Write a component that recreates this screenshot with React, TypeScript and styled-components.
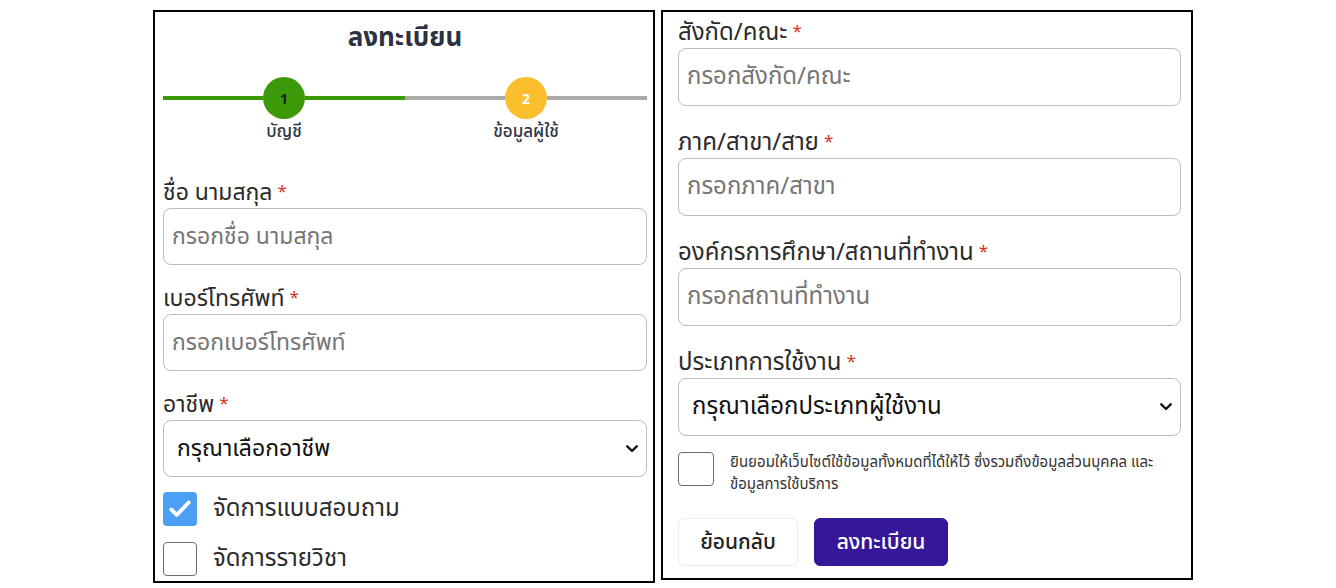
import React from "react";
import styled, { createGlobalStyle } from "styled-components";

const GlobalStyle = createGlobalStyle`
  * { box-sizing: border-box; }
  html, body { margin: 0; padding: 0; background: #ffffff; }
  body {
    font-family: "Noto Sans Thai", "Noto Sans Thai UI", "Noto Sans", sans-serif;
    color: #2b2b2b;
  }
`;

const Page = styled.div`
  display: flex;
  align-items: flex-start;
  gap: 6px;
  padding: 10px 0 0 153px;
`;

const Panel = styled.section<{ $w: number; $h: number; $pad: string; $fs: number }>`
  width: ${(p) => p.$w}px;
  height: ${(p) => p.$h}px;
  border: 2px solid #000;
  padding: ${(p) => p.$pad};
  display: flex;
  flex-direction: column;
  overflow: hidden;
  font-size: ${(p) => p.$fs}px;
`;

const Title = styled.h1`
  margin: 8px 0 0;
  text-align: center;
  font-size: 26px;
  line-height: 36px;
  font-weight: 700;
  color: #2d3142;
`;

const Stepper = styled.div`
  display: grid;
  grid-template-columns: 1fr 1fr;
  margin: 21px 0 35px;
`;

const Step = styled.div`
  display: flex;
  flex-direction: column;
  align-items: stretch;
`;

const Track = styled.div`
  display: flex;
  align-items: center;
`;

const Segment = styled.div<{ $color: string }>`
  flex: 1;
  height: 4px;
  background: ${(p) => p.$color};
`;

const Circle = styled.div<{ $bg: string; $fg: string }>`
  width: 42px;
  height: 42px;
  border-radius: 50%;
  background: ${(p) => p.$bg};
  color: ${(p) => p.$fg};
  display: flex;
  align-items: center;
  justify-content: center;
  font-size: 14px;
  font-weight: 700;
  font-family: "Open Sans", "Noto Sans", sans-serif;
`;

const StepLabel = styled.div`
  margin-top: 2px;
  height: 22px;
  text-align: center;
  font-size: 17px;
  line-height: 22px;
  font-weight: 500;
  color: #2e3547;
`;

const Field = styled.div<{ $gap: number }>`
  display: flex;
  flex-direction: column;
  margin-bottom: ${(p) => p.$gap}px;
`;

const Label = styled.label`
  display: block;
  height: 30px;
  font-size: 1em;
  line-height: 30px;
  color: #2b2b2b;
  white-space: nowrap;
`;

const Star = styled.span`
  color: #d93025;
  font-size: 17px;
  line-height: 1;
  margin-left: 5px;
  vertical-align: 3px;
`;

const TextInput = styled.input<{ $h: number }>`
  height: ${(p) => p.$h}px;
  width: 100%;
  border: 1px solid #bdbdbd;
  border-radius: 8px;
  padding: 0 8px;
  font-family: inherit;
  font-size: 1em;
  color: #222;
  background: #fff;
  outline: none;
  &::placeholder { color: #767676; }
`;

const SelectWrap = styled.div`
  position: relative;
  display: flex;
`;

const Select = styled.select<{ $h: number }>`
  appearance: none;
  -webkit-appearance: none;
  height: ${(p) => p.$h}px;
  width: 100%;
  border: 1px solid #bdbdbd;
  border-radius: 8px;
  padding: 0 32px 0 13px;
  font-family: inherit;
  font-size: 1em;
  font-weight: 400;
  color: #111;
  background: #fff;
  outline: none;
`;

const Chevron = styled.svg`
  position: absolute;
  right: 9px;
  top: 50%;
  margin-top: -4px;
  pointer-events: none;
`;

const CheckRow = styled.div<{ $mb: number }>`
  display: flex;
  align-items: center;
  gap: 16px;
  margin-bottom: ${(p) => p.$mb}px;
`;

const Box = styled.span<{ $checked?: boolean; $w?: number }>`
  flex: none;
  width: ${(p) => p.$w ?? 34}px;
  height: 34px;
  border-radius: 4px;
  border: ${(p) => (p.$checked ? "none" : "1.5px solid #6b6b6b")};
  background: ${(p) => (p.$checked ? "#4b9ff5" : "#fff")};
  display: flex;
  align-items: center;
  justify-content: center;
`;

const CheckText = styled.span`
  font-size: 24px;
  line-height: 30px;
  color: #2b2b2b;
`;

const ConsentRow = styled.div`
  display: flex;
  align-items: flex-start;
  gap: 16px;
  margin-bottom: 22px;
`;

const ConsentText = styled.p`
  margin: 0;
  font-size: 15px;
  line-height: 22px;
  color: #333;
  white-space: nowrap;
`;

const Buttons = styled.div`
  display: flex;
  gap: 16px;
`;

const Button = styled.button<{ $primary?: boolean; $w: number }>`
  width: ${(p) => p.$w}px;
  height: 48px;
  border-radius: 6px;
  border: 1px solid ${(p) => (p.$primary ? "#35179a" : "#ececec")};
  background: ${(p) => (p.$primary ? "#35179a" : "#fff")};
  color: ${(p) => (p.$primary ? "#fff" : "#222")};
  font-family: inherit;
  font-size: 21px;
  font-weight: 500;
  cursor: pointer;
`;

const Check = () => (
  <svg width="26" height="26" viewBox="0 0 24 24" fill="none">
    <path d="M4 12.5l5 5L20 6" stroke="#fff" strokeWidth="3.6" strokeLinecap="round" strokeLinejoin="round" />
  </svg>
);

const Req = ({ children }: { children: React.ReactNode }) => (
  <Label>
    {children}
    <Star>*</Star>
  </Label>
);

const Dropdown = ({ h, text }: { h: number; text: string }) => (
  <SelectWrap>
    <Select $h={h} defaultValue="">
      <option value="">{text}</option>
    </Select>
    <Chevron width="12" height="8" viewBox="0 0 12 8" fill="none">
      <path d="M1.3 1.3L6 6L10.7 1.3" stroke="#111" strokeWidth="2.4" strokeLinecap="round" strokeLinejoin="round" />
    </Chevron>
  </SelectWrap>
);

export default function App() {
  return (
    <>
      <GlobalStyle />
      <Page>
        <Panel $w={502} $h={573} $pad="0 6px 0 8px" $fs={23}>
          <Title>ลงทะเบียน</Title>
          <Stepper>
            <Step>
              <Track>
                <Segment $color="#3c9a08" />
                <Circle $bg="#3c9a08" $fg="#1a1a1a">1</Circle>
                <Segment $color="#3c9a08" />
              </Track>
              <StepLabel>บัญชี</StepLabel>
            </Step>
            <Step>
              <Track>
                <Segment $color="#aaaaaa" />
                <Circle $bg="#fbbf2e" $fg="#ffffff">2</Circle>
                <Segment $color="#aaaaaa" />
              </Track>
              <StepLabel>ข้อมูลผู้ใช้</StepLabel>
            </Step>
          </Stepper>
          <Field $gap={19}>
            <Req>ชื่อ นามสกุล</Req>
            <TextInput $h={57} placeholder="กรอกชื่อ นามสกุล" />
          </Field>
          <Field $gap={19}>
            <Req>เบอร์โทรศัพท์</Req>
            <TextInput $h={57} placeholder="กรอกเบอร์โทรศัพท์" />
          </Field>
          <Field $gap={15}>
            <Req>อาชีพ</Req>
            <Dropdown h={57} text="กรุณาเลือกอาชีพ" />
          </Field>
          <CheckRow $mb={16}>
            <Box $checked>
              <Check />
            </Box>
            <CheckText>จัดการแบบสอบถาม</CheckText>
          </CheckRow>
          <CheckRow $mb={0}>
            <Box />
            <CheckText>จัดการรายวิชา</CheckText>
          </CheckRow>
        </Panel>

        <Panel $w={532} $h={570} $pad="6px 10px 0 15px" $fs={24}>
          <Field $gap={22}>
            <Req>สังกัด/คณะ</Req>
            <TextInput $h={58} placeholder="กรอกสังกัด/คณะ" />
          </Field>
          <Field $gap={22}>
            <Req>ภาค/สาขา/สาย</Req>
            <TextInput $h={58} placeholder="กรอกภาค/สาขา" />
          </Field>
          <Field $gap={22}>
            <Req>องค์กรการศึกษา/สถานที่ทำงาน</Req>
            <TextInput $h={58} placeholder="กรอกสถานที่ทำงาน" />
          </Field>
          <Field $gap={16}>
            <Req>ประเภทการใช้งาน</Req>
            <Dropdown h={58} text="กรุณาเลือกประเภทผู้ใช้งาน" />
          </Field>
          <ConsentRow>
            <Box $w={36} />
            <ConsentText>
              ยินยอมให้เว็บไซต์ใช้ข้อมูลทั้งหมดที่ได้ให้ไว้ ซึ่งรวมถึงข้อมูลส่วนบุคคล และ
              <br />
              ข้อมูลการใช้บริการ
            </ConsentText>
          </ConsentRow>
          <Buttons>
            <Button $w={120}>ย้อนกลับ</Button>
            <Button $w={134} $primary>
              ลงทะเบียน
            </Button>
          </Buttons>
        </Panel>
      </Page>
    </>
  );
}
